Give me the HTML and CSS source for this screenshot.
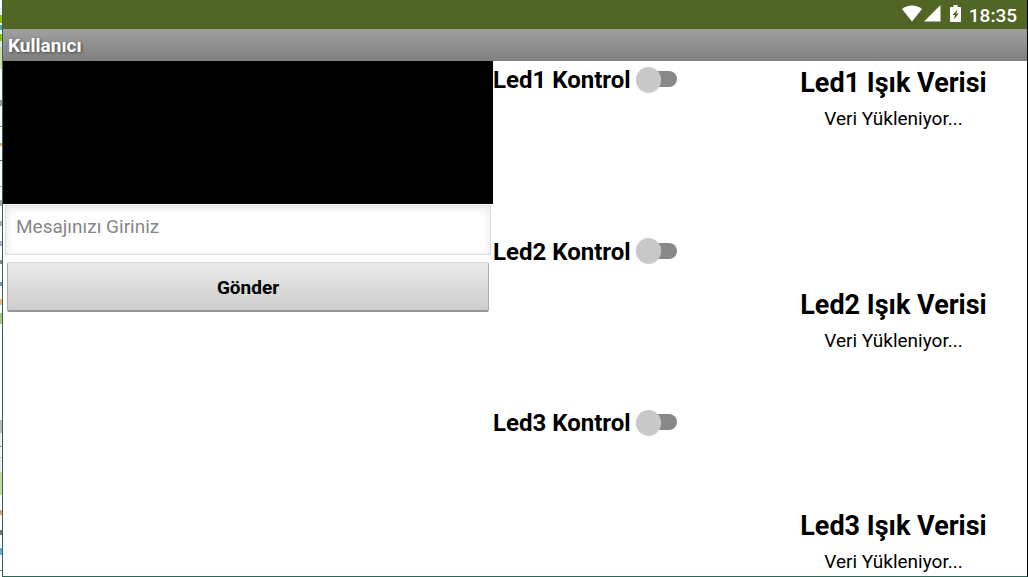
FILE: index.html
```html
<!DOCTYPE html>
<html lang="tr">
<head>
<meta charset="utf-8">
<meta name="viewport" content="width=device-width, initial-scale=1">
<title>Kullanıcı</title>
<link rel="stylesheet" href="styles.css">
</head>
<body>
<div class="desktop-edge"></div>
<div class="device">
  <header class="status-bar">
    <svg class="icon-wifi" viewBox="0 0 20 17" width="20" height="17" aria-hidden="true"><path d="M0 4C5.500-.7 14.500-.7 20 4L10 16.500Z"/></svg>
    <svg class="icon-signal" viewBox="0 0 17 17" width="17" height="17" aria-hidden="true"><path d="M16.500 0V16.500H0Z"/></svg>
    <svg class="icon-battery" viewBox="0 0 11 17" width="11" height="17" aria-hidden="true"><path fill-rule="evenodd" d="M3.500 0h4v2H10q1 0 1 1v13q0 1-1 1H1q-1 0-1-1V3q0-1 1-1h2.500ZM7.500 4.500 2.500 10h2.500l-1 4.500L8.800 8.500H6.200Z"/></svg>
    <span class="clock">18:35</span>
  </header>
  <h1 class="title-bar">Kullanıcı</h1>
  <main class="screen">
    <section class="messages">
      <div class="viewer"></div>
      <form class="message-form">
        <input class="message-input" type="text" placeholder="Mesajınızı Giriniz" aria-label="Mesajınızı Giriniz">
        <button class="send-button" type="button">Gönder</button>
      </form>
    </section>
    <section class="controls">
      <label class="control">Led1 Kontrol<input class="switch" type="checkbox" role="switch"></label>
      <label class="control">Led2 Kontrol<input class="switch" type="checkbox" role="switch"></label>
      <label class="control">Led3 Kontrol<input class="switch" type="checkbox" role="switch"></label>
    </section>
    <section class="readings">
      <div class="reading"><h2 class="reading-title">Led1 Işık Verisi</h2><p class="reading-value">Veri Yükleniyor...</p></div>
      <div class="reading"><h2 class="reading-title">Led2 Işık Verisi</h2><p class="reading-value">Veri Yükleniyor...</p></div>
      <div class="reading"><h2 class="reading-title">Led3 Işık Verisi</h2><p class="reading-value">Veri Yükleniyor...</p></div>
    </section>
  </main>
</div>
</body>
</html>
```
FILE: styles.css
```css
* {
  box-sizing: border-box;
}

body {
  margin: 0;
  min-height: 100vh;
  display: flex;
  background: #fff;
  color: #000;
  font-family: Roboto, "Liberation Sans", sans-serif;
}

.desktop-edge {
  width: 2px;
  flex: none;
  background: linear-gradient(
    #fff 0 8px, #ddd 8px 9px, #f4f4f4 9px 15px, #8fbd00 15px 23px,
    #fff 23px 25px, #4ba99a 25px 30px, #fff 30px 34px, #8fbd00 34px 41px,
    #e4e4e4 41px 47px, #cddfa9 47px 69px, #fff 69px 100px,
    #999 100px 106px, #fff 106px 126px, #888 126px 127px, #fff 127px 143px,
    #e0b060 143px 146px, #fff 146px 160px, #567 160px 161px,
    #fff 161px 186px, #aaa 186px 187px, #fff 187px 200px, #aaa 200px 206px,
    #fff 206px 221px, #aaa 221px 226px, #fff 226px 241px,
    #a9a9c8 241px 246px, #fff 246px 260px, #888 260px 264px,
    #fff 264px 282px, #7899bb 282px 286px, #fff 286px 299px,
    #efb477 299px 305px, #fff 305px 313px, #a5c77b 313px 324px,
    #fff 324px 420px, #bbb 420px 433px, #eee 433px 446px,
    #999 446px 447px, #f5f5f5 447px 457px, #bbb 457px 458px,
    #eee 458px 472px, #c8d99b 472px 495px, #fff 495px 510px,
    #e09a75 510px 515px, #fff 515px 530px, #776 530px 535px,
    #fff 535px 548px, #65ade0 548px 555px, #fff 555px 570px,
    #888 570px 571px, #fff 571px
  );
}

.device {
  flex: 1;
  display: flex;
  flex-direction: column;
  border: solid #2e6454;
  border-width: 0 1px 1px;
  border-right-color: #000;
}

.status-bar {
  height: 29px;
  display: flex;
  align-items: center;
  justify-content: flex-end;
  padding-right: 10px;
  background: #516524;
  color: #fff;
  fill: #fff;
}

.icon-wifi,
.icon-signal,
.icon-battery {
  margin-bottom: 2px;
}

.icon-signal {
  margin-left: 2px;
}

.icon-battery {
  margin-left: 9px;
  margin-right: 8px;
}

.clock {
  padding-top: 2px;
  font-size: 19px;
  font-weight: 500;
  line-height: 27px;
}

.title-bar {
  margin: 0;
  padding: 1px 5px 0;
  background: linear-gradient(#a0a0a0, #808080);
  color: #fff;
  font-size: 19px;
  line-height: 31px;
  text-shadow: 1px 1px 3px #444;
}

.screen {
  flex: 1;
  display: grid;
  grid-template-columns: 490fr 267fr 267fr;
}

.viewer {
  height: 143px;
  background: #000;
}

.message-form {
  display: flex;
  flex-direction: column;
  padding: 1px 2px;
}

.message-input {
  height: 50px;
  margin: 0;
  padding: 0 10px 8px;
  border: 1px solid #ddd;
  background: #fff;
  box-shadow: inset 0 2px 8px #e4e4e4;
  color: #000;
  font: 19px Roboto, "Liberation Sans", sans-serif;
}

.message-input::placeholder {
  color: #868686;
  opacity: 1;
}

.send-button {
  height: 50px;
  margin: 7px 2px 0;
  padding: 2px 0 0;
  border: 1px solid #aaa;
  border-top-color: #d8d8d8;
  border-bottom: 2px solid #949494;
  border-radius: 2px;
  background: linear-gradient(#eaeaea, #cdcdcd);
  color: #000;
  font: bold 19px Roboto, "Liberation Sans", sans-serif;
}

.controls {
  display: grid;
  grid-template-rows: repeat(3, 1fr);
  align-items: start;
  justify-items: start;
}

.control {
  display: flex;
  align-items: center;
  gap: 5px;
  padding-top: 1px;
  font-size: 24px;
  font-weight: bold;
  line-height: 36px;
  white-space: nowrap;
}

.switch {
  appearance: none;
  width: 41px;
  height: 26px;
  margin: 0 0 2px;
  display: flex;
  align-items: center;
}

.switch::before {
  content: "";
  z-index: 1;
  flex: none;
  width: 25px;
  height: 25px;
  border-radius: 50%;
  background: #c8c8c8;
  box-shadow: 0 1px 1px #ccc;
}

.switch::after {
  content: "";
  flex: none;
  width: 32px;
  height: 16px;
  margin-left: -16px;
  border-radius: 8px;
  background: #888;
}

.switch:checked {
  flex-direction: row-reverse;
}

.switch:checked::after {
  margin: 0 -16px 0 0;
}

.readings {
  display: flex;
  flex-direction: column;
  justify-content: space-between;
  text-align: center;
}

.reading {
  padding: 4px 0 2px;
}

.reading-title {
  margin: 0;
  font-size: 27px;
  line-height: 36px;
}

.reading-value {
  margin: 6px 0 0;
  font-size: 19px;
  line-height: 24px;
}
```
